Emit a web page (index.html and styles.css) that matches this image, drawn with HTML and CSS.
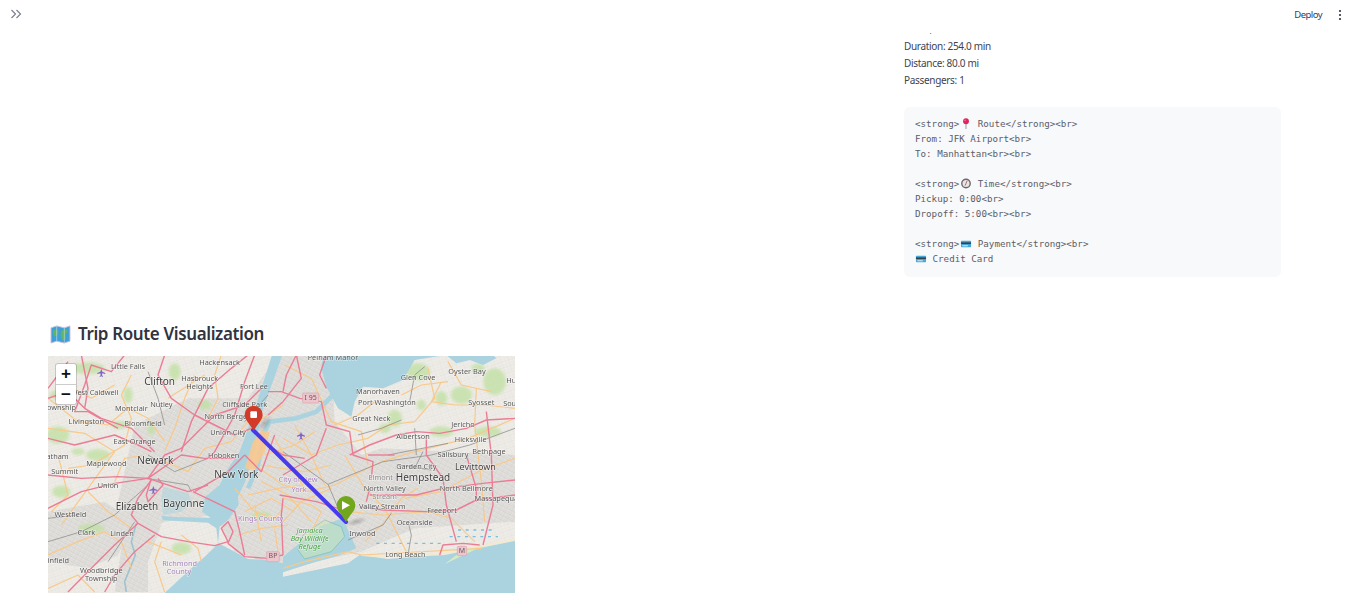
FILE: index.html
```html
<!DOCTYPE html>
<html lang="en">
<head>
<meta charset="utf-8">
<title>Trip Route Visualization</title>
<link rel="stylesheet" href="styles.css">
</head>
<body>
<header class="topbar">
  <svg class="expand" viewBox="0 0 12 10" width="12" height="10"><path d="M1.5 1 5.5 5 1.5 9M6.5 1 10.5 5 6.5 9"/></svg>
  <div class="actions">
    <span class="deploy">Deploy</span>
    <svg class="kebab" viewBox="0 0 4 12" width="4" height="12"><circle cx="2" cy="2" r="1.1"/><circle cx="2" cy="6" r="1.1"/><circle cx="2" cy="10" r="1.1"/></svg>
  </div>
</header>
<main class="page">
  <section class="columns">
    <div></div>
    <div class="details">
      <p>Fare: $0.00</p>
      <p>Duration: 254.0 min</p>
      <p>Distance: 80.0 mi</p>
      <p>Passengers: 1</p>
      <pre class="code">&lt;strong&gt;<svg class="emoji" viewBox="0 0 12 12"><path d="M6 6.5V12" stroke="#9a9aa5" stroke-width="1.1"/><circle cx="6" cy="3.6" r="3.2" fill="#e0245e"/><circle cx="5" cy="2.6" r=".9" fill="#f6a"/></svg> Route&lt;/strong&gt;&lt;br&gt;
From: JFK Airport&lt;br&gt;
To: Manhattan&lt;br&gt;&lt;br&gt;

&lt;strong&gt;<svg class="emoji" viewBox="0 0 12 12"><circle cx="6" cy="6" r="4.6" fill="#e8e6e2" stroke="#6b6670" stroke-width="1.5"/><path d="M6 6 7.2 3M6 6 5 8.2" stroke="#b0445a" stroke-width=".9"/></svg> Time&lt;/strong&gt;&lt;br&gt;
Pickup: 0:00&lt;br&gt;
Dropoff: 5:00&lt;br&gt;&lt;br&gt;

&lt;strong&gt;<svg class="emoji" viewBox="0 0 12 12"><rect x="0.5" y="3" width="11" height="7" rx="0.8" fill="#4aa8d8"/><rect x="0.5" y="4.8" width="11" height="1.8" fill="#33424f"/><rect x="2" y="8" width="6" height="1" fill="#dff1fa"/></svg> Payment&lt;/strong&gt;&lt;br&gt;
<svg class="emoji emoji-first" viewBox="0 0 12 12"><rect x="0.5" y="3" width="11" height="7" rx="0.8" fill="#4aa8d8"/><rect x="0.5" y="4.8" width="11" height="1.8" fill="#33424f"/><rect x="2" y="8" width="6" height="1" fill="#dff1fa"/></svg> Credit Card</pre>
    </div>
  </section>

  <h3 class="heading">
    <svg class="heading-icon" viewBox="0 0 22 20" width="21" height="19">
      <path d="M1 3 7 1l8 2 6-2v16l-6 2-8-2-6 2z" fill="#3f9fd6"/>
      <path d="M3 6l4-2 2 3-1 4-4 1zM12 6l5-2 2 3-3 3 1 5-4 1-2-5z" fill="#5fb36a"/>
      <path d="M7 1v16M15 3v16" stroke="#d7e8f4" stroke-width="0.8" opacity="0.7"/>
      <path d="M1 3 7 1l8 2 6-2v16l-6 2-8-2-6 2z" fill="none" stroke="#c9c2dc" stroke-width="1"/>
    </svg>
    <span>Trip Route Visualization</span>
  </h3>

  <div class="map">
    <svg class="map-art" viewBox="0 3 1401 711" width="467" height="237" preserveAspectRatio="none">
      <defs>
        <pattern id="streets" width="16" height="13" patternUnits="userSpaceOnUse" patternTransform="rotate(28)">
          <rect width="16" height="13" fill="#e3e1de"/>
          <path d="M0 0H16M0 6.5H16M0 0V13M8 0V13" stroke="#c3c1bf" stroke-width="0.9"/>
        </pattern>
        <pattern id="suburb" width="22" height="18" patternUnits="userSpaceOnUse" patternTransform="rotate(-18)">
          <rect width="22" height="18" fill="#eeece7"/>
          <path d="M0 0H22M0 9H22M0 0V18M11 0V18" stroke="#d9d7d2" stroke-width="0.8"/>
        </pattern>
        <radialGradient id="shade"><stop offset="0" stop-color="#555" stop-opacity=".35"/><stop offset="1" stop-color="#555" stop-opacity="0"/></radialGradient>
      </defs>

      <rect x="0" y="0" width="1401" height="720" fill="url(#suburb)"/>

      <g class="urban" fill="url(#streets)">
        <path d="M260 210 420 130 600 130 690 0H705V640L560 590 500 480 350 500 240 560 210 440Z"/>
        <path d="M705 0H850L860 200 940 300 1000 280 1401 300V500L1100 520 940 590 705 640Z"/>
        <path d="M0 470 170 440 260 500 210 600 120 640 0 620Z"/>
        <path d="M230 520 340 510 300 620 300 711H200Z"/>
      </g>

      <g class="green" fill="#bfe0a0">
        <ellipse cx="120" cy="40" rx="50" ry="18"/><ellipse cx="30" cy="240" rx="34" ry="26"/><ellipse cx="150" cy="300" rx="36" ry="18"/>
        <ellipse cx="215" cy="210" rx="26" ry="12"/><ellipse cx="380" cy="50" rx="18" ry="26"/><ellipse cx="130" cy="520" rx="40" ry="14"/>
        <ellipse cx="240" cy="120" rx="14" ry="24"/><ellipse cx="470" cy="150" rx="20" ry="15"/><ellipse cx="40" cy="410" rx="28" ry="18"/>
        <ellipse cx="90" cy="290" rx="20" ry="10"/><ellipse cx="310" cy="220" rx="12" ry="20"/><ellipse cx="25" cy="120" rx="20" ry="14"/>
        <ellipse cx="1110" cy="50" rx="36" ry="26"/><ellipse cx="1240" cy="120" rx="32" ry="26"/><ellipse cx="1040" cy="190" rx="22" ry="26"/>
        <ellipse cx="1340" cy="80" rx="34" ry="40"/><ellipse cx="1180" cy="230" rx="36" ry="16"/><ellipse cx="1010" cy="220" rx="18" ry="14"/>
        <ellipse cx="1320" cy="230" rx="40" ry="16"/><ellipse cx="640" cy="480" rx="30" ry="10"/><ellipse cx="1180" cy="130" rx="18" ry="22"/>
        <ellipse cx="1290" cy="40" rx="20" ry="14"/><ellipse cx="1120" cy="150" rx="14" ry="16"/><ellipse cx="400" cy="580" rx="30" ry="18"/>
      </g>

      <g class="water" fill="#aad3df">
        <path d="M350 714 430 640 470 605 512 565 560 590 600 612 660 615 705 625V665L900 625 935 600 1020 612 1100 605 1190 600 1401 558V714Z"/>
        <path d="M705 605 760 560 820 512 885 490 900 525 925 580 870 602 780 628 705 652Z"/>
        <path d="M510 565 515 515 540 495 572 450 570 425 592 380 618 290 642 170 703 0H672L618 170 575 290 540 340 515 390 472 425 462 470 488 488 380 486 340 482 345 496 480 503 505 520Z"/>
        <path d="M825 0 820 40 835 95 870 160 910 185 920 140 945 95 1005 100 1065 75 1100 15 1195 0Z"/>
        <path d="M1195 0 1225 25 1265 15 1305 30 1345 10 1335 0Z"/>
        <path d="M855 120 805 170 745 190 665 200 645 240 630 330 600 400" fill="none" stroke="#aad3df" stroke-width="14"/>
        <path d="M345 395 420 415 432 440 400 470 345 480 340 430Z" opacity=".55"/>
        <path d="M265 505 250 560 262 600 230 680 235 711" fill="none" stroke="#9fc4d0" stroke-width="5"/>
      </g>
      <path d="M750 585 765 540 830 495 880 515 890 545 850 590 770 612Z" fill="#cfe7b5" opacity=".5" stroke="#6fb59a" stroke-width="3"/>
      <path d="M985 565H1180M1205 545H1350M1230 525H1340" fill="none" stroke="#5db4dc" stroke-width="4" stroke-dasharray="9 14" opacity=".8"/>
      <path d="M940 600 1020 605 1100 600 1190 595 1401 553" fill="none" stroke="#f2e9cf" stroke-width="6"/>
      <path d="M1195 625 1240 590 1300 575" fill="#d8eac0" stroke="#d8eac0" stroke-width="3"/>

      <g class="minor" fill="none" stroke="#f8c98a" stroke-width="3.6" stroke-linejoin="round">
        <path d="M0 130 90 200 180 210 240 160 300 190 350 260"/><path d="M250 60 220 120 250 190 230 270 180 300 130 330 60 340"/>
        <path d="M0 220 110 235 200 290 120 400 40 510"/><path d="M440 60 410 130 380 220 350 290"/>
        <path d="M350 320 420 350 470 280 550 260 600 200"/><path d="M0 600 90 560 170 530 220 560 250 640"/>
        <path d="M560 400 620 470 680 490 705 460"/><path d="M600 230 630 200 705 150"/><path d="M120 410 180 470 250 520"/>
        <path d="M520 0 500 60 510 130 470 210"/><path d="M340 560 320 620 350 711"/><path d="M0 700 90 660 140 711"/>
        <path d="M620 330 705 390 780 410 860 390 960 340 1000 320"/>
        <path d="M705 250 790 300 870 270 960 250 1020 210 1100 200 1160 130 1140 40"/>
        <path d="M890 300 950 400 1010 460 1060 560 1080 600"/><path d="M1000 320 1100 290 1260 250 1401 190"/>
        <path d="M1070 430 1180 410 1290 350 1401 310"/><path d="M1180 80 1150 140 1220 150 1310 150 1401 160"/>
        <path d="M905 470 1000 480 1140 470 1210 490 1280 560"/><path d="M705 430 790 450 820 470 780 550"/>
        <path d="M1285 100 1280 210 1300 380 1310 500"/><path d="M950 560 1010 500 1060 430 1110 400"/>
        <path d="M710 30 790 70 850 200 940 230 960 330"/><path d="M705 500 760 440 850 400"/><path d="M705 640 770 620 900 590 940 600 1300 580"/>
        <path d="M640 330 700 340 770 350 850 330"/><path d="M640 380 720 420 790 500"/><path d="M600 420 690 400 760 390"/>
        <path d="M590 470 670 430 740 470"/><path d="M650 300 740 270 800 230"/><path d="M680 250 720 320 770 400"/><path d="M740 210 790 300 830 390"/>
        <path d="M570 540 640 520 720 510"/><path d="M620 450 640 560"/><path d="M680 520 690 590"/>
        <path d="M860 210 930 180 980 140"/><path d="M1060 120 1120 90 1200 80"/><path d="M1200 20 1240 90 1330 110"/>
        <path d="M60 90 130 130 200 90"/><path d="M30 300 60 420 10 470"/><path d="M200 380 230 310 290 300"/>
        <path d="M400 540 450 580 460 620"/><path d="M300 560 400 600"/><path d="M360 130 470 60"/>
      </g>
      <path class="midtown" d="M590 340 615 260 640 225 665 232 650 290 620 345Z" fill="#f8c88f" opacity=".9"/>

      <g class="rail" fill="none" stroke="#8f8f8f" stroke-width="2.4">
        <path d="M840 388 1005 320 1150 300 1265 270 1401 220"/><path d="M705 290 840 388 875 470"/>
        <path d="M1050 330 1150 345"/><path d="M1100 220 1105 300"/><path d="M1125 290 1100 340"/><path d="M900 555 1005 510 1030 475"/>
        <path d="M1080 600 1090 540 1080 500"/><path d="M0 560 100 530 200 480 300 390"/><path d="M0 490 90 480"/>
        <path d="M295 370 420 390 430 410"/><path d="M180 620 260 500"/><path d="M300 300 380 350 480 310"/>
        <path d="M300 50 330 130 350 210"/><path d="M660 120 590 200"/><path d="M1020 300 1200 265"/>
        <path d="M930 240 1000 220 1060 195"/><path d="M1085 140 1100 60 1130 35"/>
      </g>

      <g class="major" fill="none" stroke="#ea7d95" stroke-width="4.2" stroke-linejoin="round">
        <path d="M100 0 120 100 110 160 160 190 250 220 320 290"/>
        <path d="M0 360 100 370 210 365 300 370 400 300 470 310 560 310"/>
        <path d="M300 370 350 300 400 280 440 240 500 180 590 150 640 100"/>
        <path d="M310 375 270 430 250 480 270 505 340 545 420 560 500 572 540 560 520 520 540 500 555 530 540 565 590 605 660 610 705 600"/>
        <path d="M270 505 200 570 130 640 60 711"/>
        <path d="M0 460 100 410 200 385 300 370 420 410 480 390"/>
        <path d="M310 370 295 420 300 440 345 390 330 370"/>
        <path d="M440 410 540 350 590 300"/>
        <path d="M350 0 330 60 370 130 440 180 500 210 560 240 610 220"/>
        <path d="M230 0 190 50 130 30 110 90 80 170 120 170 210 220"/>
        <path d="M0 250 80 270 200 240 270 270 310 290"/>
        <path d="M400 290 430 200 480 100 550 40 600 0"/>
        <path d="M620 0 590 80 560 180 500 290 480 310"/>
        <path d="M435 410 560 470 575 530 590 600"/>
        <path d="M170 711 200 660 260 590 320 540"/>
        <path d="M0 130 60 110 110 160"/>
        <path d="M660 270 705 300 770 310"/>
        <path d="M660 180 705 140 760 70 745 0"/>
        <path d="M660 110 700 110 755 130 820 140 835 210 905 230 915 300 975 320 970 370"/>
        <path d="M905 300 965 270 1045 240 1105 230 1175 235 1255 220 1315 195 1401 190"/>
        <path d="M705 360 805 300 835 220"/>
        <path d="M745 0 715 60 705 110"/><path d="M835 0 815 60 835 100"/>
        <path d="M1135 240 1135 300 1185 370 1195 450 1225 560"/>
        <path d="M1315 170 1330 300 1335 450 1305 570"/>
        <path d="M1255 300 1285 400 1285 440"/>
        <path d="M965 420 1105 420 1185 400 1305 385 1401 375"/>
        <path d="M935 455 1005 465 1135 470 1225 465 1285 435 1401 420"/>
        <path d="M1175 600 1185 570 1245 565 1295 570"/>
        <path d="M965 400 955 440"/><path d="M695 420 805 440 870 460"/><path d="M705 430 700 480 705 600"/>
        <path d="M0 100 30 60 60 20"/><path d="M680 240 640 350 590 300"/><path d="M960 300 1040 300"/>
      </g>

      <g class="shield">
        <rect x="764" y="114" width="48" height="30" rx="3"/>
        <rect x="656" y="590" width="38" height="30" rx="3"/>
        <rect x="1228" y="574" width="28" height="28" rx="3"/>
      </g>

      <g class="labels">
        <text x="240" y="43">Little Falls</text><text x="515" y="30">Hackensack</text>
        <text class="lg" x="335" y="91">Clifton</text><text x="455" y="77">Hasbrouck</text><text x="455" y="101">Heights</text>
        <text x="140" y="120">West Caldwell</text><text x="618" y="101">Fort Lee</text><text x="35" y="165">Township</text>
        <text x="250" y="167">Montclair</text><text x="340" y="157">Nutley</text><text x="590" y="157">Cliffside Park</text>
        <text x="540" y="191">North Bergen</text><text x="115" y="208">Livingston</text><text x="285" y="212">Bloomfield</text>
        <text x="540" y="239">Union City</text><text x="260" y="268">East Orange</text><text x="527" y="309">Hoboken</text>
        <text class="lg" x="322" y="326">Newark</text><text x="175" y="332">Maplewood</text><text class="lg" x="565" y="370">New York</text>
        <text x="50" y="357">Summit</text><text x="15" y="313">Chatham</text><text x="180" y="398">Union</text>
        <text class="lg" x="407" y="455">Bayonne</text><text class="lg" x="267" y="464">Elizabeth</text>
        <text class="admin" x="638" y="497">Kings County</text><text x="67" y="485">Westfield</text><text x="115" y="539">Clark</text>
        <text x="222" y="542">Linden</text><text class="admin" x="395" y="632">Richmond</text><text class="admin" x="393" y="657">County</text>
        <text x="160" y="653">Woodbridge</text><text x="160" y="678">Township</text><text x="15" y="625">Plainfield</text>
        <text class="road" x="788" y="134">I 95</text><text class="road" x="675" y="610">BP</text><text class="road" x="1242" y="593">M</text>
        <g transform="translate(705)">
          <text x="150" y="15">Pelham Manor</text><text x="552" y="58">Oyster Bay</text><text x="405" y="75">Glen Cove</text>
          <text x="285" y="116">Manorhaven</text><text x="312" y="150">Port Washington</text><text x="595" y="150">Syosset</text>
          <text x="265" y="198">Great Neck</text><text x="540" y="216">Jericho</text><text x="390" y="251">Albertson</text>
          <text x="563" y="260">Hicksville</text><text x="510" y="305">Salisbury</text><text x="618" y="297">Bethpage</text>
          <text class="md" x="577" y="344">Levittown</text><text x="400" y="342">Garden City</text><text class="lg" x="420" y="378">Hempstead</text>
          <text class="dim" x="293" y="376">Elmont</text><text x="305" y="408">North Valley</text><text class="dim" x="305" y="433">Stream</text>
          <text x="550" y="408">North Bellmore</text><text x="640" y="437">Massapequa</text><text x="298" y="462">Valley Stream</text>
          <text x="477" y="473">Freeport</text><text x="395" y="510">Oceanside</text><text x="238" y="542">Inwood</text>
          <text x="367" y="606">Long Beach</text><text x="685" y="83">Hu</text><text x="680" y="153">Sou</text>
          <text class="park" x="80" y="535">Jamaica</text><text class="park" x="80" y="558">Bay Wildlife</text><text class="park" x="80" y="582">Refuge</text>
          <text class="admin" x="45" y="382">City of New</text><text class="admin" x="48" y="411">York</text>
        </g>
      </g>

      <g class="planes" fill="#7f63c9">
        <path d="M160 42l3 8 9 4v3l-9-2-1 6 3 3v2l-5-2-5 2v-2l3-3-1-6-9 2v-3l9-4z"/>
        <path d="M316 393l3 8 9 4v3l-9-2-1 6 3 3v2l-5-2-5 2v-2l3-3-1-6-9 2v-3l9-4z"/>
        <path d="M759 230l3 8 9 4v3l-9-2-1 6 3 3v2l-5-2-5 2v-2l3-3-1-6-9 2v-3l9-4z"/>
      </g>

      <ellipse class="pin-shadow" cx="650" cy="205" rx="30" ry="15" transform="rotate(-50 650 205)" fill="url(#shade)"/>
      <ellipse class="pin-shadow" cx="925" cy="500" rx="34" ry="12" transform="rotate(-15 925 500)" fill="url(#shade)"/>

      <path class="route" d="M615 225 894 501"/>

      <path d="M617 228C605 205 590 195 590 179a27 27 0 0 1 54 0C644 195 629 205 617 228Z" fill="#d13b27"/>
      <rect x="607" y="169" width="20" height="20" rx="3" fill="#fff"/>
      <path d="M894 501C882 478 866 468 866 451a28 28 0 0 1 56 0C922 468 906 478 894 501Z" fill="#72a61c"/>
      <path d="M882 438 906 451 882 464Z" fill="#fff"/>
    </svg>
    <div class="zoom">
      <button class="zoom-btn" type="button">+</button>
      <button class="zoom-btn" type="button">−</button>
    </div>
  </div>
</main>
</body>
</html>
```

FILE: styles.css
```css
* { box-sizing: border-box; }
html, body { margin: 0; height: 593px; overflow: hidden; background: #fff; }
body { font-family: "Noto Sans", "Open Sans", sans-serif; color: #31333f; }

.topbar {
  position: absolute; top: 0; left: 0; right: 0; height: 33px;
  background: #fff; display: flex; justify-content: space-between; align-items: flex-start;
  padding: 9px 6px 0 10px; z-index: 5;
}
.expand { fill: none; stroke: #7d8190; stroke-width: 1.2; }
.actions { display: flex; align-items: center; gap: 16px; }
.deploy { font-size: 9.5px; line-height: 10px; letter-spacing: -0.55px; color: #31406a; }
.kebab { fill: #31333f; margin-right: 1px; }

.page { padding: 21px 68px 0 48px; }
.columns { display: grid; grid-template-columns: 856px 377px; }
.details p { margin: 0; font-size: 10px; line-height: 17px; height: 17px; letter-spacing: -0.32px; color: #41434f; }
.code {
  margin: 18px 0 0; height: 170px; padding: 10px 11px;
  background: #f8f9fb; border-radius: 6px;
  font-family: "DejaVu Sans Mono", "Liberation Mono", monospace;
  font-size: 9.2px; line-height: 14.95px; color: #5b5d68; overflow: hidden;
}
.emoji { width: 12px; height: 11px; vertical-align: -2px; margin-left: 1px; }
.emoji-first { margin-left: 0; }

.heading {
  margin: 43px 0 8px; height: 28px; display: flex; align-items: center; gap: 7px; padding-left: 2px;
  font-size: 17px; font-weight: 600; line-height: 28px; letter-spacing: -0.38px; color: #31333f;
}

.map { position: relative; width: 467px; height: 237px; overflow: hidden; }
.map-art { display: block; filter: blur(0.35px); }
.green { filter: blur(5px); opacity: .75; }
.labels text {
  font-family: "Noto Sans", sans-serif; font-size: 22px; fill: #555; text-anchor: middle;
  paint-order: stroke; stroke: rgba(255,255,255,.65); stroke-width: 3px;
}
.labels .lg { font-size: 30px; fill: #3c3c3c; }
.labels .md { font-size: 27px; fill: #444; }
.labels .dim { fill: #8a8585; }
.labels .admin { fill: #a57fb8; }
.labels .park { fill: #3f9a3f; font-style: italic; }
.labels .road { font-size: 21px; fill: #6d5a5a; stroke: none; }
.shield rect { fill: #ecc5cd; stroke: #d9a3ad; stroke-width: 2; }
.route { fill: none; stroke: #3f30ee; stroke-width: 12; opacity: .95; stroke-linecap: round; }

.zoom {
  position: absolute; left: 8px; top: 8px; width: 20px; display: flex; flex-direction: column;
  background: #fff; border-radius: 2px; box-shadow: 0 0 0 1px rgba(0,0,0,.16);
}
.zoom-btn {
  width: 20px; height: 20px; padding: 0; border: 0; background: transparent;
  font-family: "Liberation Sans", sans-serif; font-size: 17px; line-height: 18px; font-weight: 700; color: #111;
}
.zoom-btn + .zoom-btn { border-top: 1px solid #ccc; }
```
